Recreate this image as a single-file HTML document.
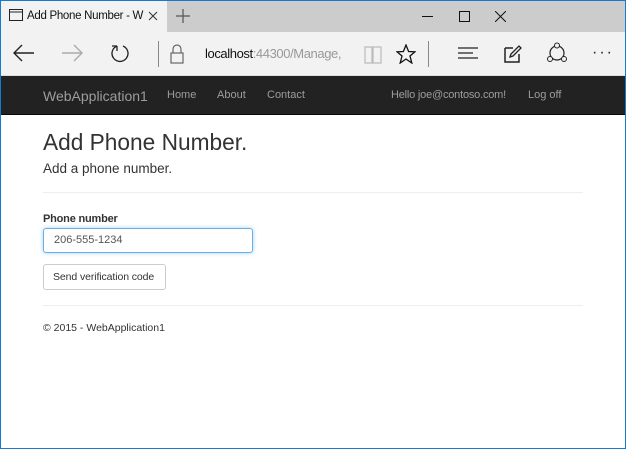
<!DOCTYPE html>
<html><head><style>
*{margin:0;padding:0;box-sizing:border-box}
body{width:626px;height:449px;overflow:hidden;background:#fff;font-family:"Liberation Sans",Arial,sans-serif;position:relative}
.frame{position:absolute;inset:0;border:1px solid #1979ca;pointer-events:none;z-index:9}
.title{position:absolute;left:0;top:0;width:626px;height:32px;background:#cccccc}
.tab{position:absolute;left:0;top:0;width:167px;height:32px;background:#f2f2f2}
.toolbar{position:absolute;left:0;top:32px;width:626px;height:44px;background:#f2f2f2;border-bottom:1px solid #ddd}
.nav{position:absolute;left:0;top:76px;width:626px;height:39px;background:#222;border-bottom:1px solid #080808;color:#9d9d9d;font-size:11px}
.abs{position:absolute;white-space:nowrap}
svg{position:absolute}
</style></head><body>
<div class="title"></div>
<div class="tab"></div>
<svg style="left:9px;top:9px" width="14" height="12"><rect x="0.5" y="0.5" width="13" height="11" fill="none" stroke="#222"/><line x1="0" y1="3" x2="14" y2="3" stroke="#222"/></svg>
<div class="abs" style="left:27px;top:10px;font-size:11.5px;color:#111;letter-spacing:-0.3px">Add Phone Number - W</div>
<svg style="left:148px;top:11px" width="10" height="10"><path d="M1 1L9 9M9 1L1 9" stroke="#333" stroke-width="1"/></svg>
<svg style="left:176px;top:9px" width="14" height="14"><path d="M7 0V14M0 7H14" stroke="#555" stroke-width="1.2"/></svg>
<svg style="left:422px;top:16px" width="11" height="2"><line x1="0" y1="0.5" x2="11" y2="0.5" stroke="#111"/></svg>
<svg style="left:459px;top:11px" width="11" height="11"><rect x="0.5" y="0.5" width="10" height="10" fill="none" stroke="#111"/></svg>
<svg style="left:495px;top:11px" width="11" height="11"><path d="M0 0L11 11M11 0L0 11" stroke="#111"/></svg>
<div class="toolbar"></div>
<svg style="left:13px;top:44px" width="22" height="18"><path d="M21 9H2M9 1L1 9L9 17" fill="none" stroke="#222" stroke-width="1.4"/></svg>
<svg style="left:61px;top:44px" width="22" height="18"><path d="M1 9H20M13 1L21 9L13 17" fill="none" stroke="#aaa" stroke-width="1.4"/></svg>
<svg style="left:109px;top:43px" width="22" height="22"><path d="M8 3A8 8 0 1 0 14 3M8 3V8M8 3H3" fill="none" stroke="#222" stroke-width="1.3"/></svg>
<div class="abs" style="left:158px;top:41px;width:1px;height:26px;background:#888"></div>
<svg style="left:170px;top:44px" width="14" height="20"><path d="M3 9V5A4 4 0 0 1 11 5V9" fill="none" stroke="#666" stroke-width="1.2"/><rect x="1" y="9" width="12" height="10" fill="none" stroke="#666" stroke-width="1.2"/></svg>
<div class="abs" style="left:205px;top:46px;font-size:13px;color:#111;letter-spacing:-0.4px">localhost<span style="color:#999">:44300/Manage,</span></div>
<svg style="left:364px;top:46px" width="18" height="18"><path d="M1 1H8V17H1ZM9 1H17V17H9Z" fill="none" stroke="#bbb" stroke-width="1.2"/></svg>
<svg style="left:396px;top:44px" width="20" height="20"><path d="M10 1L12.6 7.5L19 7.8L14 12L15.8 19L10 15L4.2 19L6 12L1 7.8L7.4 7.5Z" fill="none" stroke="#111" stroke-width="1.3"/></svg>
<div class="abs" style="left:428px;top:41px;width:1px;height:26px;background:#888"></div>
<svg style="left:458px;top:47px" width="20" height="14"><path d="M0 1H20M0 6H15M0 11H20" stroke="#222" stroke-width="1.3"/></svg>
<svg style="left:504px;top:45px" width="18" height="18"><path d="M1 3H9M1 3V17H15V9" fill="none" stroke="#222" stroke-width="1.5"/><path d="M6 12L7 9L15 1L17 3L9 11Z" fill="none" stroke="#222" stroke-width="1.3"/></svg>
<svg style="left:546px;top:42px" width="22" height="22"><circle cx="11" cy="11" r="7" fill="none" stroke="#222" stroke-width="1.2"/><circle cx="11" cy="3.5" r="2.5" fill="#f2f2f2" stroke="#222"/><circle cx="4" cy="17" r="2.5" fill="#f2f2f2" stroke="#222"/><circle cx="18" cy="17" r="2.5" fill="#f2f2f2" stroke="#222"/></svg>
<div class="abs" style="left:592px;top:44px;font-size:16px;color:#222;letter-spacing:2px">···</div>
<div class="nav">
<div class="abs" style="left:43px;top:12px;font-size:14px;color:#9d9d9d">WebApplication1</div>
<div class="abs" style="left:167px;top:13px">Home</div>
<div class="abs" style="left:217px;top:13px">About</div>
<div class="abs" style="left:267px;top:13px">Contact</div>
<div class="abs" style="left:391px;top:13px;letter-spacing:-0.2px">Hello joe@contoso.com!</div>
<div class="abs" style="left:528px;top:13px">Log off</div>
</div>
<div class="abs" style="left:43px;top:129px;font-size:22.7px;color:#333">Add Phone Number.</div>
<div class="abs" style="left:43px;top:161px;font-size:13.5px;color:#333">Add a phone number.</div>
<div class="abs" style="left:43px;top:192px;width:540px;height:1px;background:#eee"></div>
<div class="abs" style="left:43px;top:213px;font-size:11px;font-weight:bold;color:#333;letter-spacing:-0.2px">Phone number</div>
<div class="abs" style="left:43px;top:228px;width:210px;height:25px;border:1px solid #66afe9;border-radius:3px;box-shadow:0 0 4px rgba(102,175,233,.6);font-size:11px;color:#555;padding:5px 0 0 10px">206-555-1234</div>
<div class="abs" style="left:43px;top:264px;width:123px;height:26px;border:1px solid #ccc;border-radius:3px;font-size:10.5px;color:#333;padding:6px 0 0 9px;letter-spacing:-0.1px">Send verification code</div>
<div class="abs" style="left:43px;top:305px;width:540px;height:1px;background:#eee"></div>
<div class="abs" style="left:43px;top:322px;font-size:10.5px;color:#333">© 2015 - WebApplication1</div>
<div class="frame"></div>
</body></html>
